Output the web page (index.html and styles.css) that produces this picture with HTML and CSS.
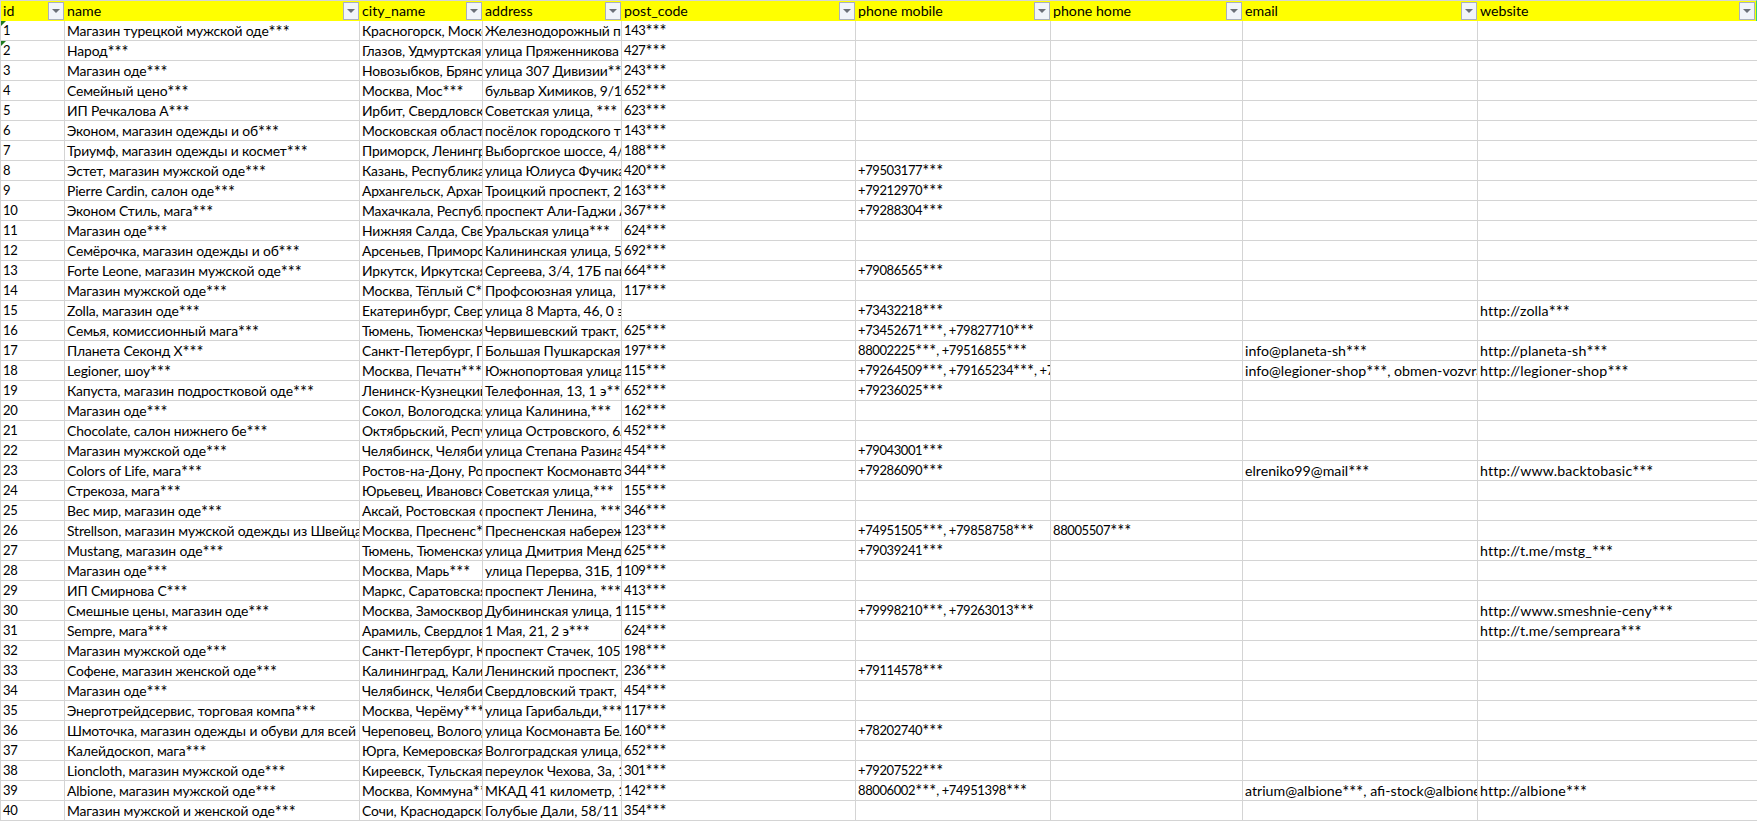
FILE: index.html
```html
<!DOCTYPE html>
<html lang="ru">
<head>
<meta charset="utf-8">
<title>Магазины одежды</title>
<link rel="stylesheet" href="styles.css">
</head>
<body>
<table class="sheet">
<colgroup><col class="c-id"><col class="c-name"><col class="c-city"><col class="c-addr"><col class="c-post"><col class="c-mob"><col class="c-home"><col class="c-mail"><col class="c-web"></colgroup>
<thead><tr>
<th>id<span class="filter"></span></th>
<th>name<span class="filter"></span></th>
<th>city_name<span class="filter"></span></th>
<th>address<span class="filter"></span></th>
<th>post_code<span class="filter"></span></th>
<th>phone mobile<span class="filter"></span></th>
<th>phone home<span class="filter"></span></th>
<th>email<span class="filter"></span></th>
<th class="last">website<span class="filter"></span></th>
</tr></thead>
<tbody>
<tr><td class="flag">1</td><td>Магазин турецкой мужской оде<i>***</i></td><td>Красногорск, Московская область</td><td>Железнодорожный проезд</td><td>143<i>***</i></td><td></td><td></td><td></td><td></td></tr>
<tr><td class="flag">2</td><td>Народ<i>***</i></td><td>Глазов, Удмуртская Республика</td><td>улица Пряженникова</td><td>427<i>***</i></td><td></td><td></td><td></td><td></td></tr>
<tr><td>3</td><td>Магазин оде<i>***</i></td><td>Новозыбков, Брянская область</td><td>улица 307 Дивизии<i>***</i></td><td>243<i>***</i></td><td></td><td></td><td></td><td></td></tr>
<tr><td>4</td><td>Семейный цено<i>***</i></td><td>Москва, Мос<i>***</i></td><td>бульвар Химиков, 9/1</td><td>652<i>***</i></td><td></td><td></td><td></td><td></td></tr>
<tr><td>5</td><td>ИП Речкалова А<i>***</i></td><td>Ирбит, Свердловская область</td><td>Советская улица, <i>***</i></td><td>623<i>***</i></td><td></td><td></td><td></td><td></td></tr>
<tr><td>6</td><td>Эконом, магазин одежды и об<i>***</i></td><td>Московская область</td><td>посёлок городского типа</td><td>143<i>***</i></td><td></td><td></td><td></td><td></td></tr>
<tr><td>7</td><td>Триумф, магазин одежды и космет<i>***</i></td><td>Приморск, Ленинградская</td><td>Выборгское шоссе, 4/1</td><td>188<i>***</i></td><td></td><td></td><td></td><td></td></tr>
<tr><td>8</td><td>Эстет, магазин мужской оде<i>***</i></td><td>Казань, Республика Татарстан</td><td>улица Юлиуса Фучика</td><td>420<i>***</i></td><td>+79503177<i>***</i></td><td></td><td></td><td></td></tr>
<tr><td>9</td><td>Pierre Cardin, салон оде<i>***</i></td><td>Архангельск, Архангельская</td><td>Троицкий проспект, 2</td><td>163<i>***</i></td><td>+79212970<i>***</i></td><td></td><td></td><td></td></tr>
<tr><td>10</td><td>Эконом Стиль, мага<i>***</i></td><td>Махачкала, Республика</td><td>проспект Али-Гаджи Акушинского</td><td>367<i>***</i></td><td>+79288304<i>***</i></td><td></td><td></td><td></td></tr>
<tr><td>11</td><td>Магазин оде<i>***</i></td><td>Нижняя Салда, Свердловская</td><td>Уральская улица<i>***</i></td><td>624<i>***</i></td><td></td><td></td><td></td><td></td></tr>
<tr><td>12</td><td>Семёрочка, магазин одежды и об<i>***</i></td><td>Арсеньев, Приморский край</td><td>Калининская улица, 5</td><td>692<i>***</i></td><td></td><td></td><td></td><td></td></tr>
<tr><td>13</td><td>Forte Leone, магазин мужской оде<i>***</i></td><td>Иркутск, Иркутская область</td><td>Сергеева, 3/4, 17Б павильон</td><td>664<i>***</i></td><td>+79086565<i>***</i></td><td></td><td></td><td></td></tr>
<tr><td>14</td><td>Магазин мужской оде<i>***</i></td><td>Москва, Тёплый С<i>***</i></td><td>Профсоюзная улица, </td><td>117<i>***</i></td><td></td><td></td><td></td><td></td></tr>
<tr><td>15</td><td>Zolla, магазин оде<i>***</i></td><td>Екатеринбург, Свердловская</td><td>улица 8 Марта, 46, 0 этаж</td><td></td><td>+73432218<i>***</i></td><td></td><td></td><td>http://zolla<i>***</i></td></tr>
<tr><td>16</td><td>Семья, комиссионный мага<i>***</i></td><td>Тюмень, Тюменская область</td><td>Червишевский тракт, 1</td><td>625<i>***</i></td><td>+73452671<i>***</i>, +79827710<i>***</i></td><td></td><td></td><td></td></tr>
<tr><td>17</td><td>Планета Секонд Х<i>***</i></td><td>Санкт-Петербург, Петроградский</td><td>Большая Пушкарская улица</td><td>197<i>***</i></td><td>88002225<i>***</i>, +79516855<i>***</i></td><td></td><td>info@planeta-sh<i>***</i></td><td>http://planeta-sh<i>***</i></td></tr>
<tr><td>18</td><td>Legioner, шоу<i>***</i></td><td>Москва, Печатн<i>***</i></td><td>Южнопортовая улица</td><td>115<i>***</i></td><td>+79264509<i>***</i>, +79165234<i>***</i>, +79</td><td></td><td>info@legioner-shop<i>***</i>, obmen-vozvrat</td><td>http://legioner-shop<i>***</i></td></tr>
<tr><td>19</td><td>Капуста, магазин подростковой оде<i>***</i></td><td>Ленинск-Кузнецкий, Кемеровская</td><td>Телефонная, 13, 1 э<i>***</i></td><td>652<i>***</i></td><td>+79236025<i>***</i></td><td></td><td></td><td></td></tr>
<tr><td>20</td><td>Магазин оде<i>***</i></td><td>Сокол, Вологодская область</td><td>улица Калинина,<i>***</i></td><td>162<i>***</i></td><td></td><td></td><td></td><td></td></tr>
<tr><td>21</td><td>Chocolate, салон нижнего бе<i>***</i></td><td>Октябрьский, Республика</td><td>улица Островского, 6А</td><td>452<i>***</i></td><td></td><td></td><td></td><td></td></tr>
<tr><td>22</td><td>Магазин мужской оде<i>***</i></td><td>Челябинск, Челябинская</td><td>улица Степана Разина</td><td>454<i>***</i></td><td>+79043001<i>***</i></td><td></td><td></td><td></td></tr>
<tr><td>23</td><td>Colors of Life, мага<i>***</i></td><td>Ростов-на-Дону, Ростовская</td><td>проспект Космонавтов</td><td>344<i>***</i></td><td>+79286090<i>***</i></td><td></td><td>elreniko99@mail<i>***</i></td><td>http://www.backtobasic<i>***</i></td></tr>
<tr><td>24</td><td>Стрекоза, мага<i>***</i></td><td>Юрьевец, Ивановская</td><td>Советская улица,<i>***</i></td><td>155<i>***</i></td><td></td><td></td><td></td><td></td></tr>
<tr><td>25</td><td>Вес мир, магазин оде<i>***</i></td><td>Аксай, Ростовская область</td><td>проспект Ленина, <i>***</i></td><td>346<i>***</i></td><td></td><td></td><td></td><td></td></tr>
<tr><td>26</td><td>Strellson, магазин мужской одежды из Швейцарии</td><td>Москва, Пресненс<i>***</i></td><td>Пресненская набережная</td><td>123<i>***</i></td><td>+74951505<i>***</i>, +79858758<i>***</i></td><td>88005507<i>***</i></td><td></td><td></td></tr>
<tr><td>27</td><td>Mustang, магазин оде<i>***</i></td><td>Тюмень, Тюменская область</td><td>улица Дмитрия Менделеева</td><td>625<i>***</i></td><td>+79039241<i>***</i></td><td></td><td></td><td>http://t.me/mstg_<i>***</i></td></tr>
<tr><td>28</td><td>Магазин оде<i>***</i></td><td>Москва, Марь<i>***</i></td><td>улица Перерва, 31Б, 1</td><td>109<i>***</i></td><td></td><td></td><td></td><td></td></tr>
<tr><td>29</td><td>ИП Смирнова С<i>***</i></td><td>Маркс, Саратовская область</td><td>проспект Ленина, <i>***</i></td><td>413<i>***</i></td><td></td><td></td><td></td><td></td></tr>
<tr><td>30</td><td>Смешные цены, магазин оде<i>***</i></td><td>Москва, Замоскворечье</td><td>Дубининская улица, 1</td><td>115<i>***</i></td><td>+79998210<i>***</i>, +79263013<i>***</i></td><td></td><td></td><td>http://www.smeshnie-ceny<i>***</i></td></tr>
<tr><td>31</td><td>Sempre, мага<i>***</i></td><td>Арамиль, Свердловская</td><td>1 Мая, 21, 2 э<i>***</i></td><td>624<i>***</i></td><td></td><td></td><td></td><td>http://t.me/sempreara<i>***</i></td></tr>
<tr><td>32</td><td>Магазин мужской оде<i>***</i></td><td>Санкт-Петербург, Кировский</td><td>проспект Стачек, 105</td><td>198<i>***</i></td><td></td><td></td><td></td><td></td></tr>
<tr><td>33</td><td>Софене, магазин женской оде<i>***</i></td><td>Калининград, Калининградская</td><td>Ленинский проспект, 1</td><td>236<i>***</i></td><td>+79114578<i>***</i></td><td></td><td></td><td></td></tr>
<tr><td>34</td><td>Магазин оде<i>***</i></td><td>Челябинск, Челябинская</td><td>Свердловский тракт, 1</td><td>454<i>***</i></td><td></td><td></td><td></td><td></td></tr>
<tr><td>35</td><td>Энерготрейдсервис, торговая компа<i>***</i></td><td>Москва, Черёму<i>***</i></td><td>улица Гарибальди,<i>***</i></td><td>117<i>***</i></td><td></td><td></td><td></td><td></td></tr>
<tr><td>36</td><td>Шмоточка, магазин одежды и обуви для всей семьи</td><td>Череповец, Вологодская</td><td>улица Космонавта Беляева</td><td>160<i>***</i></td><td>+78202740<i>***</i></td><td></td><td></td><td></td></tr>
<tr><td>37</td><td>Калейдоскоп, мага<i>***</i></td><td>Юрга, Кемеровская область</td><td>Волгоградская улица, 1</td><td>652<i>***</i></td><td></td><td></td><td></td><td></td></tr>
<tr><td>38</td><td>Lioncloth, магазин мужской оде<i>***</i></td><td>Киреевск, Тульская область</td><td>переулок Чехова, 3а, 1</td><td>301<i>***</i></td><td>+79207522<i>***</i></td><td></td><td></td><td></td></tr>
<tr><td>39</td><td>Albione, магазин мужской оде<i>***</i></td><td>Москва, Коммуна<i>***</i></td><td>МКАД 41 километр, 1</td><td>142<i>***</i></td><td>88006002<i>***</i>, +74951398<i>***</i></td><td></td><td>atrium@albione<i>***</i>, afi-stock@albione</td><td>http://albione<i>***</i></td></tr>
<tr><td>40</td><td>Магазин мужской и женской оде<i>***</i></td><td>Сочи, Краснодарский край</td><td>Голубые Дали, 58/11</td><td>354<i>***</i></td><td></td><td></td><td></td><td></td></tr>
</tbody>
</table>
</body>
</html>
```
FILE: styles.css
```css
html, body {
  margin: 0;
  padding: 0;
  background: #fff;
  overflow: hidden;
}
.sheet {
  table-layout: fixed;
  border-collapse: separate;
  border-spacing: 0;
  width: 1757px;
  font-family: "Lato", "Open Sans", "Noto Sans", sans-serif;
  font-size: 14.2px;
  color: #000;
}
.c-id { width: 65px; }
.c-name { width: 295px; }
.c-city { width: 123px; }
.c-addr { width: 139px; }
.c-post { width: 234px; }
.c-mob { width: 195px; }
.c-home { width: 192px; }
.c-mail { width: 235px; }
.c-web { width: 279px; }
th, td {
  padding: 0 0 0 2px;
  text-align: left;
  font-weight: 400;
  box-sizing: border-box;
  overflow: hidden;
  white-space: nowrap;
}
th {
  position: relative;
  height: 21px;
  line-height: 20px;
  vertical-align: top;
  background: #ff0;
  border-top: 1px solid #d4d4d4;
}
th:first-child, td:first-child {
  border-left: 1px solid #d4d4d4;
}
td {
  position: relative;
  height: 20px;
  line-height: 19px;
  vertical-align: top;
  border-right: 1px solid #d4d4d4;
  border-bottom: 1px solid #d4d4d4;
}
td:last-child {
  border-right: 0;
}
/* Cyrillic text columns */
td:nth-child(2), td:nth-child(3), td:nth-child(4) {
  font-size: 13.9px;
  letter-spacing: -0.15px;
}
/* Number columns: tighter digits */
td:nth-child(1), td:nth-child(5), td:nth-child(6), td:nth-child(7) {
  font-size: 13px;
  letter-spacing: -0.4px;
}
td:nth-child(9) {
  letter-spacing: 0.15px;
}
/* Masked tail of a value */
i {
  font-style: normal;
  font-size: 16.5px;
  letter-spacing: 0;
  line-height: 0;
  vertical-align: -2px;
}
.filter {
  position: absolute;
  top: 1px;
  right: 1px;
  width: 16px;
  height: 18px;
  box-sizing: border-box;
  border: 1px solid #a9b0be;
  background: #f1f4f9;
  display: flex;
  align-items: center;
  justify-content: center;
}
.filter::after {
  content: "";
  border-style: solid;
  border-width: 4px 4px 0;
  border-color: #6b6f78 transparent transparent;
}
th.last {
  border-right: 1px solid #2fd07a;
}
.flag::before {
  content: "";
  position: absolute;
  left: 0;
  top: 0;
  border-style: solid;
  border-width: 5px 5px 0 0;
  border-color: #1f7a1f transparent transparent;
}
```
